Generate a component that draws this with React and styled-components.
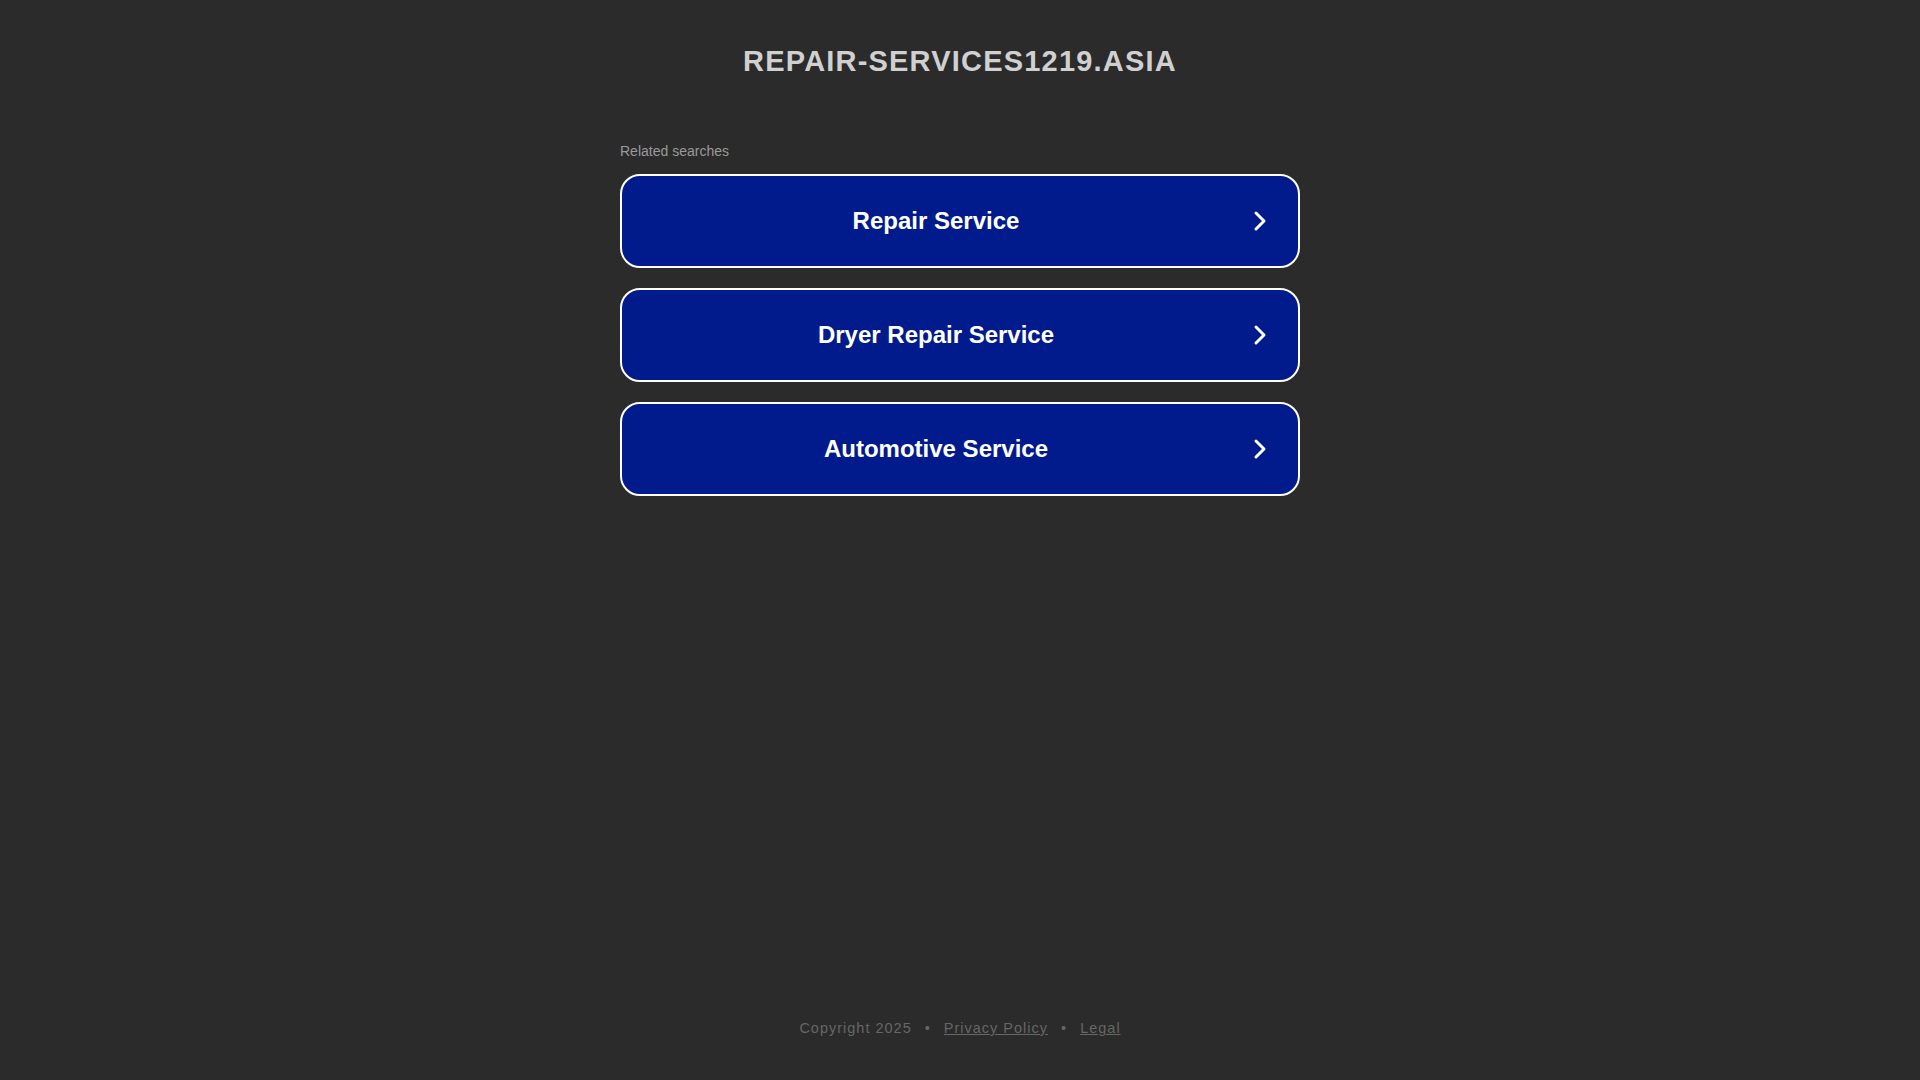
import React from 'react'
import styled, { createGlobalStyle } from 'styled-components'

const Global = createGlobalStyle`
html, body {
    margin: 0;
    padding: 0;
    background: #2b2b2b;
    font-family: Arial, "Liberation Sans", Helvetica, sans-serif;
}
`;

const links = ['Repair Service', 'Dryer Repair Service', 'Automotive Service'];

const Chevron = () => (
    <svg width="16" height="22" viewBox="0 0 16 22" fill="none">
        <path d="M4 3l8 8-8 8" stroke="#fff" strokeWidth="3" strokeLinecap="round" strokeLinejoin="round" />
    </svg>
);

const App = () => {
    return(
        <Page>
            <Global />
            <Domain>REPAIR-SERVICES1219.ASIA</Domain>
            <Main>
                <Label>Related searches</Label>
                <List>
                    {links.map(text => (
                        <LinkButton href="#" key={text}>
                            <span>{text}</span>
                            <Arrow><Chevron /></Arrow>
                        </LinkButton>
                    ))}
                </List>
            </Main>
            <Footer>
                <span>Copyright 2025</span>
                <Dot>•</Dot>
                <FooterLink href="#">Privacy Policy</FooterLink>
                <Dot>•</Dot>
                <FooterLink href="#">Legal</FooterLink>
            </Footer>
        </Page>
    )
}

//styled components
const Page = styled.div`
min-height: 100vh;
display: flex;
flex-direction: column;
align-items: center;
box-sizing: border-box;
`;
const Domain = styled.h1`
margin: 44px 0 0;
font-size: 29px;
line-height: 34px;
font-weight: bold;
letter-spacing: 1.2px;
color: #d0d0d0;
`;
const Main = styled.div`
width: 680px;
margin-top: 65px;
`;
const Label = styled.div`
font-size: 14px;
line-height: 16px;
color: #9a9a9a;
margin-bottom: 15px;
`;
const List = styled.div`
display: flex;
flex-direction: column;
gap: 20px;
`;
const LinkButton = styled.a`
position: relative;
display: flex;
align-items: center;
justify-content: center;
height: 94px;
box-sizing: border-box;
padding-right: 48px;
border: 2px solid #fff;
border-radius: 20px;
background: #011a8c;
color: #fff;
text-decoration: none;
font-size: 24px;
font-weight: bold;
`;
const Arrow = styled.span`
position: absolute;
right: 30px;
top: 50%;
transform: translateY(-50%);
display: flex;
`;
const Footer = styled.div`
margin-top: auto;
margin-bottom: 43px;
display: flex;
align-items: center;
gap: 13px;
font-size: 14.5px;
line-height: 18px;
letter-spacing: 1px;
color: #666;
`;
const Dot = styled.span`
color: #666;
`;
const FooterLink = styled.a`
color: #666;
text-decoration: underline;
`;

export default App;
